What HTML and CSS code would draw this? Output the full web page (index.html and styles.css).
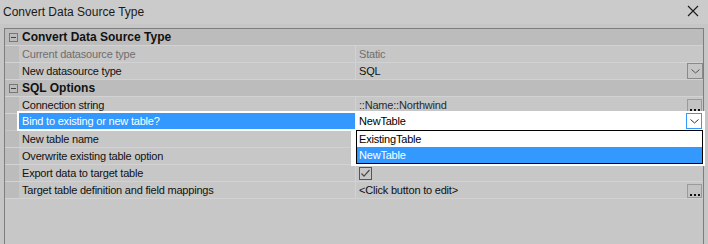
FILE: index.html
```
<!DOCTYPE html>
<html>
<head>
<meta charset="utf-8">
<link rel="stylesheet" href="styles.css">
</head>
<body>
<div class="window">
  <div class="titlebar">
    <span class="title">Convert Data Source Type</span>
    <svg class="close" width="12" height="12" viewBox="0 0 12 12"><path d="M1 1 L11 11 M11 1 L1 11" stroke="#1a1a1a" stroke-width="1.1" fill="none"/></svg>
  </div>
  <div class="grid">
    <div class="row cat">
      <div class="margin"><span class="toggle"></span></div>
      <div class="cattext">Convert Data Source Type</div>
    </div>
    <div class="row prop">
      <div class="margin"></div>
      <div class="name ro">Current datasource type</div>
      <div class="value ro">Static</div>
    </div>
    <div class="row prop">
      <div class="margin"></div>
      <div class="name">New datasource type</div>
      <div class="value">SQL<span class="ddbtn"><svg width="9" height="5" viewBox="0 0 9 5"><path d="M0.5 0.5 L4.5 4 L8.5 0.5" stroke="#555" stroke-width="1" fill="none"/></svg></span></div>
    </div>
    <div class="row cat">
      <div class="margin"><span class="toggle"></span></div>
      <div class="cattext">SQL Options</div>
    </div>
    <div class="row prop">
      <div class="margin"></div>
      <div class="name">Connection string</div>
      <div class="value dim">::Name::Northwind<span class="ellipsis"><i></i><i></i><i></i></span></div>
    </div>
    <div class="row prop selected">
      <div class="margin"></div>
      <div class="edit">
        <div class="name">Bind to existing or new table?</div>
        <div class="value">NewTable<span class="ddbtn active"><svg width="9" height="5" viewBox="0 0 9 5"><path d="M0.5 0.5 L4.5 4 L8.5 0.5" stroke="#333" stroke-width="1" fill="none"/></svg></span></div>
      </div>
      <div class="popup">
        <div class="list">
          <div class="item">ExistingTable</div>
          <div class="item hl">NewTable</div>
        </div>
      </div>
    </div>
    <div class="row prop">
      <div class="margin"></div>
      <div class="name">New table name</div>
      <div class="value"></div>
    </div>
    <div class="row prop">
      <div class="margin"></div>
      <div class="name">Overwrite existing table option</div>
      <div class="value"></div>
    </div>
    <div class="row prop">
      <div class="margin"></div>
      <div class="name">Export data to target table</div>
      <div class="value"><span class="check"><svg width="11" height="11" viewBox="0 0 11 11"><path d="M1.5 5.5 L4 8.2 L9.5 2" stroke="#4a4a4a" stroke-width="1.2" fill="none"/></svg></span></div>
    </div>
    <div class="row prop">
      <div class="margin"></div>
      <div class="name">Target table definition and field mappings</div>
      <div class="value">&lt;Click button to edit&gt;<span class="ellipsis"><i></i><i></i><i></i></span></div>
    </div>
  </div>
</div>
</body>
</html>
```
FILE: styles.css
```
html, body {
  margin: 0;
  padding: 0;
}
body {
  width: 708px;
  height: 244px;
  overflow: hidden;
  background: #c6c6c6;
  font-family: "Liberation Sans", Arial, sans-serif;
}
.window {
  display: flex;
  flex-direction: column;
  height: 244px;
}
.titlebar {
  height: 24px;
  background: #cbcbcb;
  display: flex;
  align-items: center;
  justify-content: space-between;
  padding: 0 9px 0 3px;
  flex: none;
}
.title {
  font-size: 12px;
  color: #1a1a1a;
  margin-top: -1px;
}
.close {
  display: block;
  margin-top: -2px;
}
.grid {
  margin: 4px 0 0 4px;
  width: 698px;
  flex: 1;
  border: 1px solid #7e7e7e;
  border-bottom: none;
  background: #c7c7c7;
  font-size: 11px;
  letter-spacing: -0.2px;
  color: #111;
}
.row {
  display: flex;
  height: 16px;
  border-bottom: 1px solid #d2d2d2;
  line-height: 16px;
  position: relative;
}
.margin {
  width: 14px;
  flex: none;
  background: #bcbcbc;
  display: flex;
  align-items: center;
  justify-content: center;
}
.cat {
  background: #bcbcbc;
}
.cattext {
  font-weight: bold;
  font-size: 12px;
  letter-spacing: 0;
  padding-left: 3px;
  color: #111;
}
.toggle {
  width: 7px;
  height: 7px;
  border: 1px solid #777;
  position: relative;
  margin-left: 2px;
}
.toggle::after {
  content: "";
  position: absolute;
  left: 1px;
  top: 3px;
  width: 5px;
  height: 1px;
  background: #444;
}
.name {
  width: 333px;
  flex: none;
  padding-left: 3px;
  border-right: 1px solid #d2d2d2;
  background: #c7c7c7;
  white-space: nowrap;
}
.value {
  flex: 1;
  padding-left: 3px;
  display: flex;
  align-items: center;
  justify-content: space-between;
  white-space: nowrap;
}
.ro {
  color: #6e6e6e;
}
.dim {
  color: #2a2a2a;
}
.ddbtn {
  width: 14px;
  height: 14px;
  border: 1px solid #8a8a8a;
  display: flex;
  align-items: center;
  justify-content: center;
  background: #c6c6c6;
}
.ddbtn svg {
  display: block;
  margin-top: 1px;
}
.ddbtn.active {
  border-color: #3399ff;
  background: #fff;
  margin-right: 1px;
}
.ellipsis {
  border: 1px solid #9a9a9a;
  background: #c3c3c3;
  display: flex;
  align-items: flex-end;
  justify-content: center;
  gap: 2px;
  padding-bottom: 1px;
  box-sizing: border-box;
  margin-right: 1px;
  margin-top: 1px;
  width: 15px;
  height: 14px;
}
.ellipsis i {
  width: 2px;
  height: 2px;
  background: #111;
}
.selected {
  z-index: 2;
  border-bottom-color: transparent;
}
.edit {
  flex: 1;
  display: flex;
  margin-top: -1px;
  height: 16px;
  box-shadow: 0 0 0 2px #fff;
  background: #fff;
}
.selected .name {
  background: #3399ff;
  color: #fff;
  border-right-color: #fff;
}
.selected .value {
  background: #fff;
  color: #000;
}
.check {
  width: 11px;
  height: 11px;
  border: 1px solid #555;
  display: flex;
  align-items: center;
  justify-content: center;
  margin-top: 1px;
}
.check svg {
  display: block;
}
.popup {
  position: absolute;
  left: 346px;
  top: 16px;
  background: #fff;
  padding: 0 2px 2px 5px;
  z-index: 3;
}
.list {
  width: 345px;
  border: 1px solid #000;
  background: #fff;
  color: #000;
}
.item {
  height: 16px;
  line-height: 16px;
  padding-left: 2px;
}
.item.hl {
  background: #3399ff;
  color: #fff;
}
```
